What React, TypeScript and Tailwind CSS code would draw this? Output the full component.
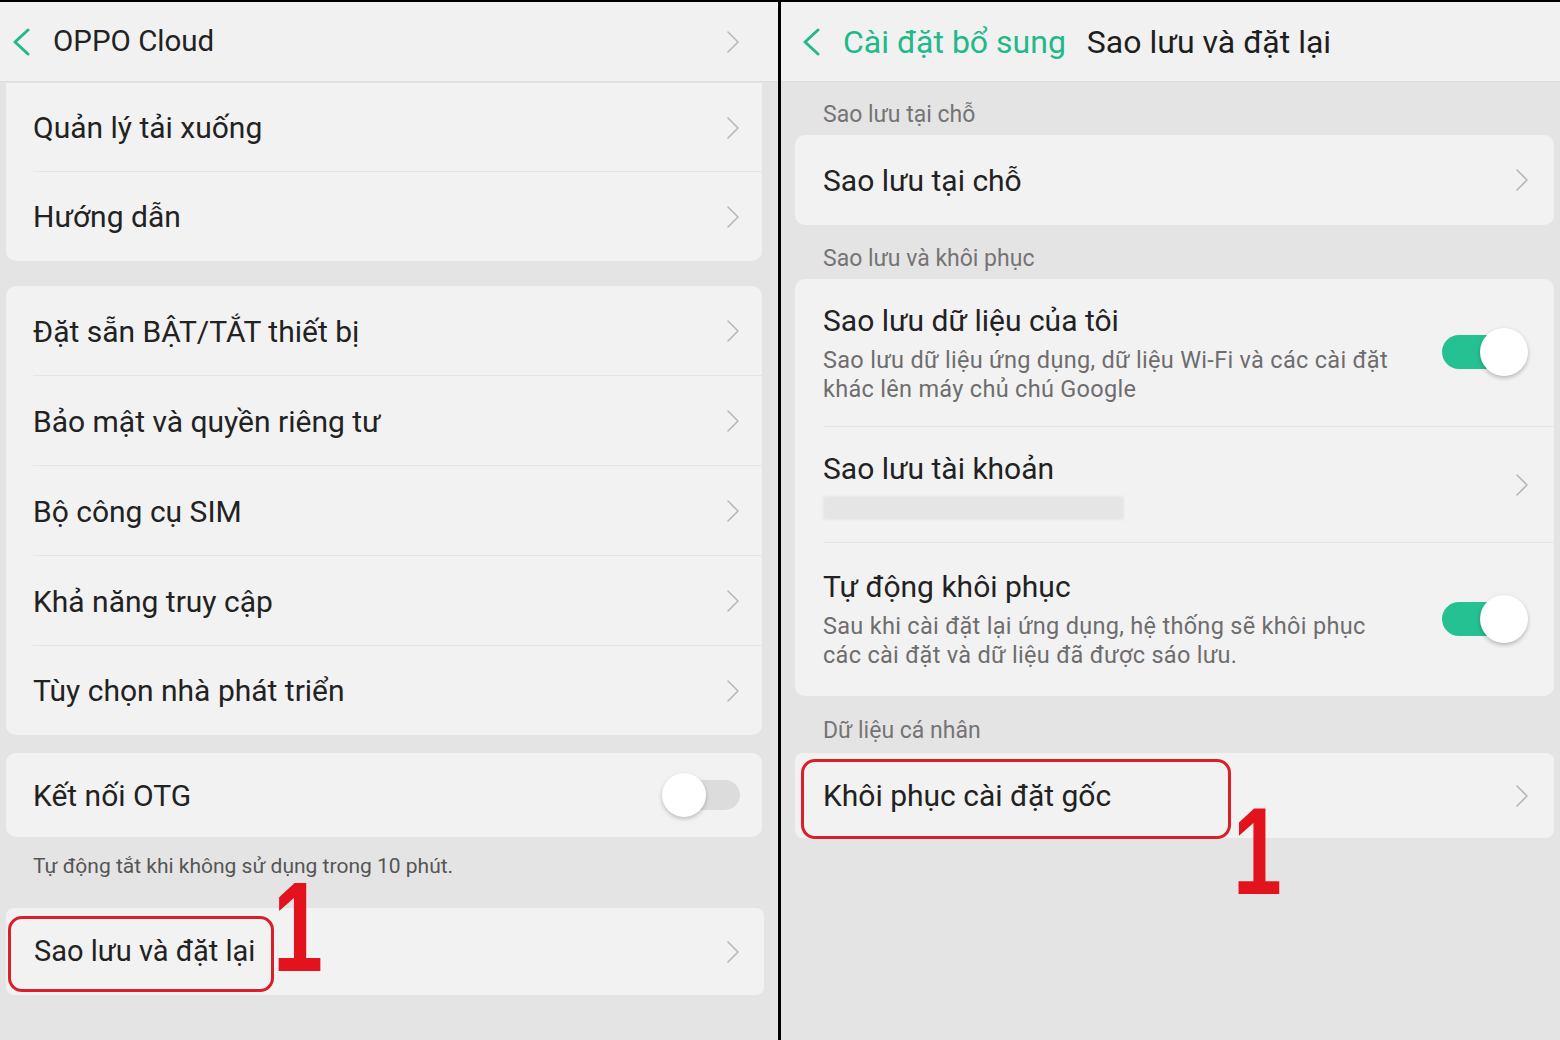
import React from "react";

const FONT = { fontFamily: "Roboto, 'Noto Sans', 'Liberation Sans', sans-serif" };

function Chevron({ className = "" }: { className?: string }) {
  return (
    <svg width="14" height="24" viewBox="0 0 14 24" className={className} fill="none">
      <path d="M2 2 L12 12 L2 22" stroke="#b9b8b9" strokeWidth="1.6" strokeLinecap="round" strokeLinejoin="round" />
    </svg>
  );
}

function BackArrow() {
  return (
    <svg width="20" height="28" viewBox="0 0 20 28" fill="none">
      <path d="M17 2 L4 14 L17 26" stroke="#22b98a" strokeWidth="3" strokeLinecap="round" strokeLinejoin="round" />
    </svg>
  );
}

function Toggle({ on }: { on: boolean }) {
  if (on) {
    return (
      <div className="relative h-[50px] w-[86px] shrink-0">
        <div className="absolute left-0 top-[7px] h-[34px] w-[70px] rounded-full bg-[#26c193]" />
        <div className="absolute right-0 top-0 h-[48px] w-[48px] rounded-full bg-white shadow-[0_2px_4px_rgba(0,0,0,0.25)]" />
      </div>
    );
  }
  return (
    <div className="relative h-[44px] w-[78px] shrink-0">
      <div className="absolute right-0 top-[7px] h-[30px] w-[64px] rounded-full bg-[#dddcdd]" />
      <div className="absolute left-0 top-0 h-[44px] w-[44px] rounded-full bg-white shadow-[0_2px_4px_rgba(0,0,0,0.22)]" />
    </div>
  );
}

function LeftRow({ label, last = false, h = "h-[90px]" }: { label: string; last?: boolean; h?: string }) {
  return (
    <div className={`relative flex ${h} items-center pl-[27px] pr-[22px]`}>
      <span className="flex-1 text-[30px] text-[#222]">{label}</span>
      <Chevron />
      {!last && <div className="absolute bottom-0 left-[27px] right-0 h-px bg-[#e6e4e5]" />}
    </div>
  );
}

// red step marker drawn over the screenshot
function RedOne({ className }: { className: string }) {
  return (
    <span
      className={`pointer-events-none absolute origin-left scale-x-70 font-bold leading-[0.72] text-[#e2131c] ${className}`}
      style={{ fontFamily: "'Liberation Sans', Arial, sans-serif" }}
    >
      1
    </span>
  );
}

function LeftPanel() {
  return (
    <div className="flex h-full w-[778px] flex-col bg-[#e5e4e5]">
      <div className="flex h-[80px] items-center border-b border-[#dedcdd] bg-[#f2f1f2] pl-[11px] pr-[38px]">
        <BackArrow />
        <span className="ml-[22px] flex-1 text-[29.5px] text-[#222]">OPPO Cloud</span>
        <Chevron />
      </div>

      <div className="ml-[6px] mr-[16px] mt-[1px] rounded-b-[10px] bg-[#f3f2f3]">
        <LeftRow label="Quản lý tải xuống" h="h-[89px]" />
        <LeftRow label="Hướng dẫn" h="h-[89px]" last />
      </div>

      <div className="ml-[6px] mr-[16px] mt-[25px] rounded-[10px] bg-[#f3f2f3]">
        <LeftRow label="Đặt sẵn BẬT/TẮT thiết bị" />
        <LeftRow label="Bảo mật và quyền riêng tư" />
        <LeftRow label="Bộ công cụ SIM" />
        <LeftRow label="Khả năng truy cập" />
        <LeftRow label="Tùy chọn nhà phát triển" h="h-[89px]" last />
      </div>

      <div className="ml-[6px] mr-[16px] mt-[18px] flex h-[84px] items-center rounded-[10px] bg-[#f3f2f3] pl-[27px] pr-[22px]">
        <span className="flex-1 text-[30px] text-[#222]">Kết nối OTG</span>
        <Toggle on={false} />
      </div>

      <div className="flex h-[71px] items-center pb-[12px] pl-[33px] text-[21px] text-[#555]">
        Tự động tắt khi không sử dụng trong 10 phút.
      </div>

      <div className="relative ml-[6px] mr-[14px] flex h-[87px] items-center rounded-[8px] bg-[#f3f2f3] pl-[28px] pr-[24px]">
        <span className="flex-1 text-[29px] text-[#222]">Sao lưu và đặt lại</span>
        <Chevron />
        <div className="pointer-events-none absolute left-[2px] top-[8px] h-[76px] w-[266px] rounded-[14px] border-[3px] border-[#d9202a]" />
        <RedOne className="left-[267px] top-[-27px] text-[128px]" />
      </div>
    </div>
  );
}

function SectionLabel({ text, h }: { text: string; h: string }) {
  return <div className={`flex ${h} items-center pl-[42px] pt-[14px] text-[23px] text-[#757475]`}>{text}</div>;
}

function RightPanel() {
  return (
    <div className="flex h-full flex-1 flex-col bg-[#e5e4e5]">
      <div className="flex h-[80px] items-center border-b border-[#dedcdd] bg-[#f2f1f2] pl-[20px]">
        <BackArrow />
        <span className="ml-[22px] text-[32px] text-[#22b98a]">Cài đặt bổ sung</span>
        <span className="ml-[21px] text-[32px] text-[#1e1e1e]">Sao lưu và đặt lại</span>
      </div>

      <SectionLabel text="Sao lưu tại chỗ" h="h-[53px]" />
      <div className="ml-[14px] mr-[6px] flex h-[90px] items-center rounded-[10px] bg-[#f3f2f3] pl-[28px] pr-[25px]">
        <span className="flex-1 text-[30px] text-[#222]">Sao lưu tại chỗ</span>
        <Chevron />
      </div>

      <SectionLabel text="Sao lưu và khôi phục" h="h-[54px]" />
      <div className="ml-[14px] mr-[6px] rounded-[10px] bg-[#f3f2f3]">
        <div className="relative flex h-[148px] items-center pl-[28px] pr-[26px]">
          <div className="flex flex-1 flex-col">
            <span className="text-[30px] leading-[36px] text-[#222]">Sao lưu dữ liệu của tôi</span>
            <span className="mt-[7px] text-[23.5px] leading-[29px] tracking-[0.3px] text-[#6e6d6e]">
              Sao lưu dữ liệu ứng dụng, dữ liệu Wi-Fi và các cài đặt
              <br />
              khác lên máy chủ chú Google
            </span>
          </div>
          <Toggle on />
          <div className="absolute bottom-0 left-[28px] right-0 h-px bg-[#e6e4e5]" />
        </div>
        <div className="relative flex h-[116px] items-center pl-[28px] pr-[25px]">
          <div className="flex flex-1 flex-col">
            <span className="text-[30px] leading-[36px] text-[#222]">Sao lưu tài khoản</span>
            <div className="mt-[9px] h-[24px] w-[301px] rounded-[3px] bg-[#e6e5e6] blur-[1px]" />
          </div>
          <Chevron />
          <div className="absolute bottom-0 left-[28px] right-0 h-px bg-[#e6e4e5]" />
        </div>
        <div className="flex h-[153px] items-center pl-[28px] pr-[26px]">
          <div className="flex flex-1 flex-col">
            <span className="text-[30px] leading-[36px] text-[#222]">Tự động khôi phục</span>
            <span className="mt-[7px] text-[23.5px] leading-[29px] tracking-[0.3px] text-[#6e6d6e]">
              Sau khi cài đặt lại ứng dụng, hệ thống sẽ khôi phục
              <br />
              các cài đặt và dữ liệu đã được sáo lưu.
            </span>
          </div>
          <Toggle on />
        </div>
      </div>

      <SectionLabel text="Dữ liệu cá nhân" h="h-[57px]" />
      <div className="relative ml-[14px] mr-[6px] flex h-[85px] items-center rounded-[8px] bg-[#f3f2f3] pl-[28px] pr-[25px]">
        <span className="flex-1 text-[30px] text-[#222]">Khôi phục cài đặt gốc</span>
        <Chevron />
        <div className="pointer-events-none absolute left-[6px] top-[6px] h-[80px] w-[430px] rounded-[14px] border-[3px] border-[#d9202a]" />
        <RedOne className="left-[438px] top-[53px] text-[125px]" />
      </div>
    </div>
  );
}

export default function App() {
  return (
    <div className="flex h-[1040px] w-[1560px] overflow-hidden border-t-2 border-black bg-[#e5e4e5]" style={FONT}>
      <LeftPanel />
      <div className="h-full w-[3px] shrink-0 bg-black" />
      <RightPanel />
    </div>
  );
}
